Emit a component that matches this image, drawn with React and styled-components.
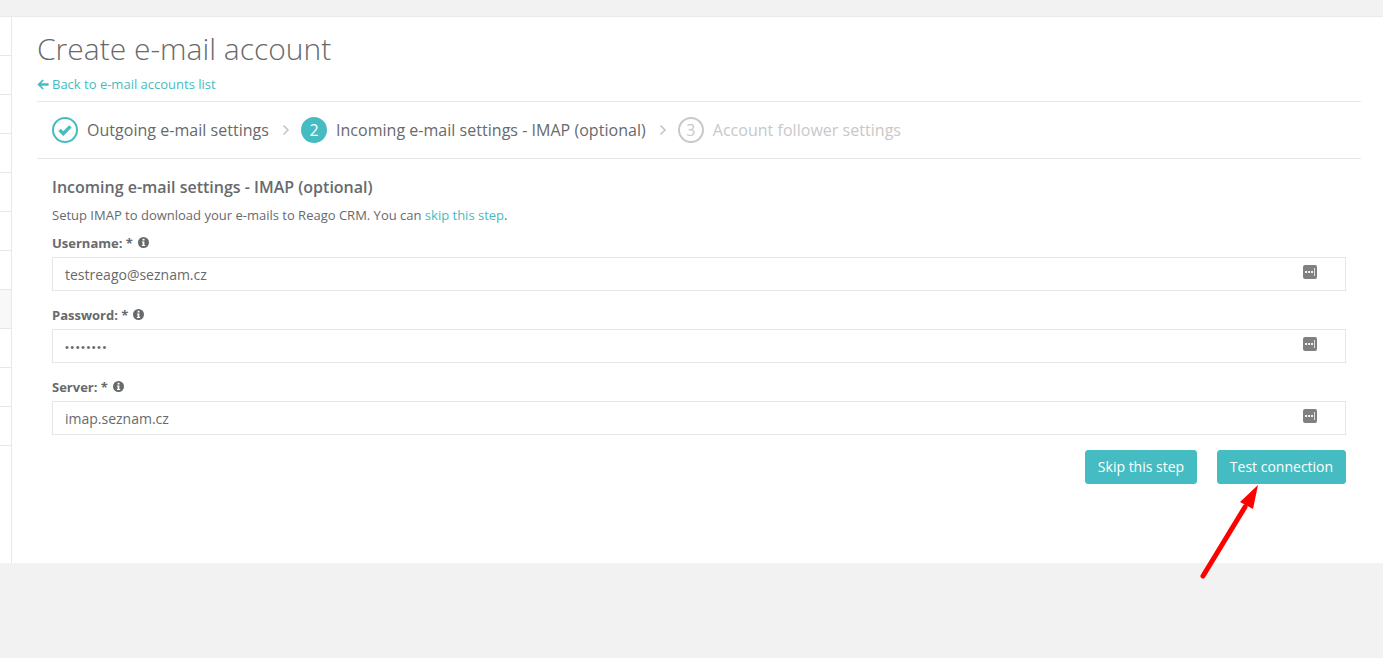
import React from 'react';
import styled, { createGlobalStyle } from 'styled-components';

const Global = createGlobalStyle`
  html, body { margin: 0; padding: 0; background: #f2f2f2; }
  body { font-family: "Open Sans", "Liberation Sans", sans-serif; color: #676a6c; }
  * { box-sizing: border-box; }
`;

const Page = styled.div`
  width: 1383px;
  height: 658px;
  background: #f2f2f2;
  padding-top: 16px;
  overflow: hidden;
`;
const Shell = styled.div`
  display: flex;
  height: 547px;
  background: #fff;
  border-top: 1px solid #e7eaec;
  position: relative;
`;
const Rail = styled.div`
  width: 12px;
  flex: none;
  border-right: 1px solid #e7e7e7;
`;
const RailRow = styled.div`
  height: 39px;
  border-bottom: 1px solid #e7e7e7;
  background: ${p => (p.$shade ? '#f8f8f8' : '#fff')};
`;
const Main = styled.main`
  flex: 1;
  padding: 0 22px 0 25px;
  min-width: 0;
`;
const Title = styled.h1`
  margin: 12px 0 0;
  font-size: 30px;
  line-height: 40px;
  font-weight: 300;
  color: #676a6c;
`;
const BackLink = styled.a`
  display: flex;
  align-items: center;
  gap: 3px;
  margin-top: 5px;
  height: 20px;
  font-size: 13px;
  color: #45bcc2;
`;
const Steps = styled.div`
  display: flex;
  align-items: center;
  height: 58px;
  margin-top: 7px;
  padding-left: 15px;
  border-top: 1px solid #e7e7e7;
  border-bottom: 1px solid #e7e7e7;
`;
const StepBadge = styled.span`
  width: 26px;
  height: 26px;
  flex: none;
  border-radius: 50%;
  display: flex;
  align-items: center;
  justify-content: center;
  font-size: 16px;
  border: 2px solid ${p => (p.$state === 'todo' ? '#c8c8c8' : '#45bcc2')};
  background: ${p => (p.$state === 'active' ? '#45bcc2' : '#fff')};
  color: ${p => (p.$state === 'active' ? '#fff' : p.$state === 'todo' ? '#c8c8c8' : '#45bcc2')};
`;
const StepLabel = styled.span`
  margin-left: 9px;
  font-size: 16px;
  letter-spacing: 0.03px;
  color: ${p => (p.$todo ? '#c8c8c8' : '#676a6c')};
  white-space: nowrap;
`;
const Chevron = styled.svg`
  margin: 0 11px 0 13px;
  width: 8px;
  height: 12px;
  flex: none;
`;
const Form = styled.form`
  padding: 0 15px;
`;
const Heading = styled.h2`
  margin: 17px 0 0;
  font-size: 16px;
  line-height: 22px;
  font-weight: 600;
  color: #676a6c;
`;
const Hint = styled.p`
  margin: 8px 0 0;
  font-size: 13px;
  line-height: 18px;
`;
const Link = styled.a`
  color: #45bcc2;
`;
const Field = styled.div`
  margin-top: ${p => (p.$first ? '10px' : '15px')};
`;
const Label = styled.label`
  display: flex;
  align-items: center;
  gap: 5px;
  height: 17px;
  font-size: 13px;
  font-weight: 700;
  color: #676a6c;
`;
const InputBox = styled.div`
  display: flex;
  align-items: center;
  justify-content: space-between;
  height: 34px;
  margin-top: 6px;
  padding: 0 28px 4px 12px;
  border: 1px solid #e5e6e7;
  font-size: 14px;
  color: #676a6c;
`;
const InputValue = styled.span`
  padding-top: 4px;
`;
const Dots = styled.span`
  font-family: "Liberation Sans", sans-serif;
  font-size: 11px;
  letter-spacing: 1.5px;
  padding-top: 5px;
`;
const Actions = styled.div`
  display: flex;
  justify-content: flex-end;
  gap: 20px;
  margin-top: 15px;
`;
const Button = styled.button`
  height: 34px;
  padding: 0 0 1px;
  width: ${p => p.$w}px;
  border: 1px solid #45bcc2;
  border-radius: 3px;
  background: #45bcc2;
  color: #fff;
  font-family: inherit;
  font-size: 14px;
`;
const Arrow = styled.svg`
  position: absolute;
  left: 1195px;
  top: 462px;
  width: 70px;
  height: 105px;
`;

const Info = () => (
  <svg width="11" height="11" viewBox="0 0 11 11">
    <circle cx="5.5" cy="5.5" r="5.5" fill="#676a6c" />
    <rect x="4.6" y="1.8" width="1.9" height="1.7" fill="#fff" />
    <path d="M3.9 4.4H6.4V7.9H7.2V9H3.9V7.9H4.6V5.5H3.9Z" fill="#fff" />
  </svg>
);
const KeyIcon = () => (
  <svg width="14" height="14" viewBox="0 0 14 14">
    <rect width="14" height="14" rx="2" fill="#808080" />
    <rect x="2" y="6" width="2" height="2" fill="#f4f4f4" />
    <rect x="5" y="6" width="2" height="2" fill="#f4f4f4" />
    <rect x="8" y="6" width="2" height="2" fill="#f4f4f4" />
    <rect x="11" y="3" width="1" height="8" fill="#e0e0e0" />
  </svg>
);
const Chev = () => (
  <Chevron viewBox="0 0 8 12">
    <path d="M1.5 1.5L6 6L1.5 10.5" fill="none" stroke="#c4c4c4" strokeWidth="1.5" />
  </Chevron>
);

const fields = [
  { label: 'Username: *', value: 'testreago@seznam.cz' },
  { label: 'Password: *', dots: '••••••••' },
  { label: 'Server: *', value: 'imap.seznam.cz' },
];
const rails = [0, 1, 2, 3, 4, 5, 6, 7, 8, 9, 10];

export default function App() {
  return (
    <>
      <Global />
      <Page>
        <Shell>
          <Rail>
            {rails.map(i => <RailRow key={i} $shade={i === 7} />)}
          </Rail>
          <Main>
            <Title>Create e-mail account</Title>
            <BackLink>
              <svg width="12" height="11" viewBox="0 0 12 11">
                <path d="M5.6 0.4L6.8 1.6L4.1 4.2H11.6V6.8H4.1L6.8 9.4L5.6 10.6L0.4 5.5Z" fill="#45bcc2" />
              </svg>
              Back to e-mail accounts list
            </BackLink>
            <Steps>
              <StepBadge $state="done">
                <svg width="14" height="12" viewBox="0 0 14 12">
                  <path d="M1.6 6L5.3 9.7L12.4 2.4" fill="none" stroke="#45bcc2" strokeWidth="3.4" />
                </svg>
              </StepBadge>
              <StepLabel>Outgoing e-mail settings</StepLabel>
              <Chev />
              <StepBadge $state="active">2</StepBadge>
              <StepLabel>Incoming e-mail settings - IMAP (optional)</StepLabel>
              <Chev />
              <StepBadge $state="todo">3</StepBadge>
              <StepLabel $todo>Account follower settings</StepLabel>
            </Steps>
            <Form>
              <Heading>Incoming e-mail settings - IMAP (optional)</Heading>
              <Hint>Setup IMAP to download your e-mails to Reago CRM. You can <Link>skip this step</Link>.</Hint>
              {fields.map((f, i) => (
                <Field key={f.label} $first={i === 0}>
                  <Label>{f.label} <Info /></Label>
                  <InputBox>
                    {f.dots ? <Dots>{f.dots}</Dots> : <InputValue>{f.value}</InputValue>}
                    <KeyIcon />
                  </InputBox>
                </Field>
              ))}
              <Actions>
                <Button type="button" $w={112}>Skip this step</Button>
                <Button type="button" $w={129}>Test connection</Button>
              </Actions>
            </Form>
          </Main>
          <Arrow viewBox="0 0 70 105">
            <path d="M8 97L50 28" stroke="#ff0000" strokeWidth="5" strokeLinecap="round" fill="none" />
            <path d="M63 6L58 30L45 23Z" fill="#ff0000" />
          </Arrow>
        </Shell>
      </Page>
    </>
  );
}
